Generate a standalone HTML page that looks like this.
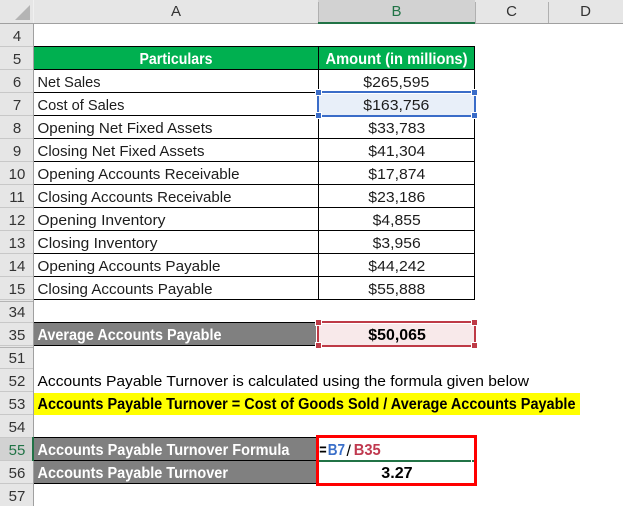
<!DOCTYPE html>
<html>
<head>
<meta charset="utf-8">
<style>
html,body{margin:0;padding:0;background:#fff;width:623px;height:506px;overflow:hidden}
svg{display:block}
text{font-family:"Liberation Sans",sans-serif;font-size:14.6px;fill:#1c1c1c}
.b{font-weight:700;font-size:15.4px}
.w{fill:#fff;font-weight:700;font-size:15.4px}
.k{fill:#000}
.h{fill:#333;font-size:15px;text-anchor:middle}
.n{fill:#333;font-size:15px;text-anchor:middle}
</style>
</head>
<body>
<svg width="623" height="506" viewBox="0 0 623 506" xmlns="http://www.w3.org/2000/svg">
<rect width="623" height="506" fill="#fff"/>
<g shape-rendering="crispEdges">
<!-- headers -->
<rect x="0" y="0" width="623" height="23" fill="#e6e6e6"/>
<rect x="0" y="23" width="33" height="483" fill="#e6e6e6"/>
<rect x="318" y="0" width="157" height="22" fill="#d2d2d2"/>
<rect x="0" y="23" width="623" height="1" fill="#a0a0a0"/>
<rect x="318" y="22" width="157" height="2" fill="#217346"/>
<rect x="33" y="0" width="1" height="23" fill="#f0f0f0"/>
<rect x="33" y="23" width="1" height="483" fill="#a0a0a0"/>
<rect x="475" y="2" width="1" height="21" fill="#b0b0b0"/>
<rect x="548" y="2" width="1" height="21" fill="#b0b0b0"/>
<rect x="318" y="2" width="1" height="20" fill="#b0b0b0"/>
<!-- row header lines -->
<rect x="0" y="46" width="33" height="1" fill="#c8c8c8"/>
<rect x="0" y="69" width="33" height="1" fill="#c8c8c8"/>
<rect x="0" y="92" width="33" height="1" fill="#c8c8c8"/>
<rect x="0" y="115" width="33" height="1" fill="#c8c8c8"/>
<rect x="0" y="138" width="33" height="1" fill="#c8c8c8"/>
<rect x="0" y="161" width="33" height="1" fill="#c8c8c8"/>
<rect x="0" y="184" width="33" height="1" fill="#c8c8c8"/>
<rect x="0" y="207" width="33" height="1" fill="#c8c8c8"/>
<rect x="0" y="230" width="33" height="1" fill="#c8c8c8"/>
<rect x="0" y="253" width="33" height="1" fill="#c8c8c8"/>
<rect x="0" y="276" width="33" height="1" fill="#c8c8c8"/>
<rect x="0" y="299" width="33" height="1" fill="#c8c8c8"/>
<rect x="0" y="301" width="33" height="1" fill="#b4b4b4"/>
<rect x="0" y="322" width="33" height="1" fill="#c8c8c8"/>
<rect x="0" y="345" width="33" height="1" fill="#c8c8c8"/>
<rect x="0" y="347" width="33" height="1" fill="#b4b4b4"/>
<rect x="0" y="368" width="33" height="1" fill="#c8c8c8"/>
<rect x="0" y="391" width="33" height="1" fill="#c8c8c8"/>
<rect x="0" y="414" width="33" height="1" fill="#c8c8c8"/>
<rect x="0" y="437" width="33" height="1" fill="#c8c8c8"/>
<rect x="0" y="438" width="32" height="22" fill="#d2d2d2"/>
<rect x="32" y="437" width="2" height="24" fill="#217346"/>
<rect x="0" y="460" width="32" height="1" fill="#c8c8c8"/>
<rect x="0" y="483" width="33" height="1" fill="#c8c8c8"/>
<!-- table -->
<rect x="34" y="46" width="441" height="24" fill="#00b050"/>
<rect x="34" y="46" width="441" height="1" fill="#000"/>
<rect x="34" y="69" width="441" height="1" fill="#000"/>
<rect x="34" y="92" width="441" height="1" fill="#000"/>
<rect x="34" y="115" width="441" height="1" fill="#000"/>
<rect x="34" y="138" width="441" height="1" fill="#000"/>
<rect x="34" y="161" width="441" height="1" fill="#000"/>
<rect x="34" y="184" width="441" height="1" fill="#000"/>
<rect x="34" y="207" width="441" height="1" fill="#000"/>
<rect x="34" y="230" width="441" height="1" fill="#000"/>
<rect x="34" y="253" width="441" height="1" fill="#000"/>
<rect x="34" y="276" width="441" height="1" fill="#000"/>
<rect x="34" y="299" width="441" height="1" fill="#000"/>
<rect x="318" y="46" width="1" height="254" fill="#000"/>
<rect x="474" y="46" width="1" height="254" fill="#000"/>
<!-- row 35 -->
<rect x="34" y="322" width="282" height="24" fill="#808080"/>
<rect x="34" y="322" width="282" height="1" fill="#000"/>
<rect x="34" y="345" width="282" height="1" fill="#000"/>
<!-- yellow -->
<rect x="34" y="393" width="546" height="22" fill="#ffff00"/>
<!-- rows 55/56 -->
<rect x="34" y="437" width="282" height="47" fill="#808080"/>
<rect x="34" y="437" width="282" height="1" fill="#000"/>
<rect x="34" y="460" width="282" height="1" fill="#000"/>
<rect x="34" y="483" width="282" height="1" fill="#000"/>
<!-- blue selection -->
<rect x="316" y="91" width="161" height="26" fill="#fff"/>
<rect x="319" y="94" width="155" height="21" fill="#e8eff9"/>
<rect x="317" y="91" width="159" height="2" fill="#3a6cc8"/>
<rect x="317" y="115" width="159" height="2" fill="#3a6cc8"/>
<rect x="317" y="91" width="2" height="26" fill="#3a6cc8"/>
<rect x="474" y="91" width="2" height="26" fill="#3a6cc8"/>
<rect x="315" y="89" width="7" height="7" fill="#fff"/>
<rect x="471" y="89" width="7" height="7" fill="#fff"/>
<rect x="315" y="112" width="7" height="7" fill="#fff"/>
<rect x="471" y="112" width="7" height="7" fill="#fff"/>
<rect x="316" y="90" width="5" height="5" fill="#3a6cc8"/>
<rect x="472" y="90" width="5" height="5" fill="#3a6cc8"/>
<rect x="316" y="113" width="5" height="5" fill="#3a6cc8"/>
<rect x="472" y="113" width="5" height="5" fill="#3a6cc8"/>
<!-- red selection -->
<rect x="319" y="324" width="155" height="21" fill="#f8e9ea"/>
<rect x="317" y="321" width="159" height="2" fill="#be3a46"/>
<rect x="317" y="345" width="159" height="2" fill="#be3a46"/>
<rect x="317" y="321" width="2" height="26" fill="#be3a46"/>
<rect x="474" y="321" width="2" height="26" fill="#be3a46"/>
<rect x="315" y="319" width="7" height="7" fill="#fff"/>
<rect x="471" y="319" width="7" height="7" fill="#fff"/>
<rect x="315" y="342" width="7" height="7" fill="#fff"/>
<rect x="471" y="342" width="7" height="7" fill="#fff"/>
<rect x="316" y="320" width="5" height="5" fill="#be3a46"/>
<rect x="472" y="320" width="5" height="5" fill="#be3a46"/>
<rect x="316" y="343" width="5" height="5" fill="#be3a46"/>
<rect x="472" y="343" width="5" height="5" fill="#be3a46"/>
<!-- green line and red box -->
<rect x="319" y="460" width="152" height="2" fill="#217346"/>
<rect x="472" y="460" width="2" height="2" fill="#217346"/>
<rect x="316" y="435" width="161" height="3" fill="#ff0000"/>
<rect x="316" y="483" width="161" height="3" fill="#ff0000"/>
<rect x="316" y="435" width="3" height="51" fill="#ff0000"/>
<rect x="474" y="435" width="3" height="51" fill="#ff0000"/>
</g>
<polygon points="15,20 30,5 30,20" fill="#b4b4b4"/>
<!-- column letters -->
<text class="h" x="176" y="16">A</text>
<text class="h" x="396.500" y="16" style="fill:#217346">B</text>
<text class="h" x="511.500" y="16">C</text>
<text class="h" x="585.500" y="16">D</text>
<!-- row numbers -->
<text class="n" x="17" y="41">4</text>
<text class="n" x="17" y="64">5</text>
<text class="n" x="17" y="87">6</text>
<text class="n" x="17" y="110">7</text>
<text class="n" x="17" y="133">8</text>
<text class="n" x="17" y="156">9</text>
<text class="n" x="17" y="179">10</text>
<text class="n" x="17" y="202">11</text>
<text class="n" x="17" y="225">12</text>
<text class="n" x="17" y="248">13</text>
<text class="n" x="17" y="271">14</text>
<text class="n" x="17" y="294">15</text>
<text class="n" x="17" y="317">34</text>
<text class="n" x="17" y="340">35</text>
<text class="n" x="17" y="363">51</text>
<text class="n" x="17" y="386">52</text>
<text class="n" x="17" y="409">53</text>
<text class="n" x="17" y="432">54</text>
<text class="n" x="17" y="455" style="fill:#217346">55</text>
<text class="n" x="17" y="478">56</text>
<text class="n" x="17" y="501">57</text>
<!-- table header -->
<text class="w" x="139.500" y="64" textLength="73" lengthAdjust="spacingAndGlyphs">Particulars</text>
<text class="w" x="325.500" y="64" textLength="142" lengthAdjust="spacingAndGlyphs">Amount (in millions)</text>
<!-- labels -->
<text x="37.500" y="87" textLength="63" lengthAdjust="spacingAndGlyphs">Net Sales</text>
<text x="37.500" y="110" textLength="87" lengthAdjust="spacingAndGlyphs">Cost of Sales</text>
<text x="37.500" y="133" textLength="175" lengthAdjust="spacingAndGlyphs">Opening Net Fixed Assets</text>
<text x="37.500" y="156" textLength="167" lengthAdjust="spacingAndGlyphs">Closing Net Fixed Assets</text>
<text x="37.500" y="179" textLength="202" lengthAdjust="spacingAndGlyphs">Opening Accounts Receivable</text>
<text x="37.500" y="202" textLength="194" lengthAdjust="spacingAndGlyphs">Closing Accounts Receivable</text>
<text x="37.500" y="225" textLength="128" lengthAdjust="spacingAndGlyphs">Opening Inventory</text>
<text x="37.500" y="248" textLength="120" lengthAdjust="spacingAndGlyphs">Closing Inventory</text>
<text x="37.500" y="271" textLength="183" lengthAdjust="spacingAndGlyphs">Opening Accounts Payable</text>
<text x="37.500" y="294" textLength="175" lengthAdjust="spacingAndGlyphs">Closing Accounts Payable</text>
<!-- values -->
<text x="363.300" y="87" textLength="66" lengthAdjust="spacingAndGlyphs">$265,595</text>
<text x="363.300" y="110" textLength="66" lengthAdjust="spacingAndGlyphs">$163,756</text>
<text x="368.300" y="133" textLength="57" lengthAdjust="spacingAndGlyphs">$33,783</text>
<text x="368.300" y="156" textLength="57" lengthAdjust="spacingAndGlyphs">$41,304</text>
<text x="368.300" y="179" textLength="57" lengthAdjust="spacingAndGlyphs">$17,874</text>
<text x="368.300" y="202" textLength="57" lengthAdjust="spacingAndGlyphs">$23,186</text>
<text x="372.700" y="225" textLength="48" lengthAdjust="spacingAndGlyphs">$4,855</text>
<text x="372.700" y="248" textLength="48" lengthAdjust="spacingAndGlyphs">$3,956</text>
<text x="368.300" y="271" textLength="57" lengthAdjust="spacingAndGlyphs">$44,242</text>
<text x="368.300" y="294" textLength="57" lengthAdjust="spacingAndGlyphs">$55,888</text>
<!-- row 35 -->
<text class="w" x="37.500" y="340" textLength="184" lengthAdjust="spacingAndGlyphs">Average Accounts Payable</text>
<text class="b k" x="368.300" y="340" textLength="57.500" lengthAdjust="spacingAndGlyphs">$50,065</text>
<!-- notes -->
<text class="k" x="37.500" y="386" textLength="491.500" lengthAdjust="spacingAndGlyphs">Accounts Payable Turnover is calculated using the formula given below</text>
<text class="b k" x="37.500" y="409" textLength="538" lengthAdjust="spacingAndGlyphs">Accounts Payable Turnover = Cost of Goods Sold / Average Accounts Payable</text>
<!-- rows 55/56 -->
<text class="w" x="37.500" y="455" textLength="252" lengthAdjust="spacingAndGlyphs">Accounts Payable Turnover Formula</text>
<text class="w" x="37.500" y="478" textLength="190.500" lengthAdjust="spacingAndGlyphs">Accounts Payable Turnover</text>
<text class="b k" x="319.300" y="455" textLength="7.400" lengthAdjust="spacingAndGlyphs">=</text>
<text class="b" x="327.700" y="455" textLength="17.300" lengthAdjust="spacingAndGlyphs" style="fill:#3a6fc9">B7</text>
<text class="k" x="346.500" y="456" style="font-size:16px">/</text>
<text class="b" x="353.700" y="455" textLength="27" lengthAdjust="spacingAndGlyphs" style="fill:#c0394f">B35</text>
<text class="b k" x="381.300" y="478" textLength="31.300" lengthAdjust="spacingAndGlyphs">3.27</text>
</svg>
</body>
</html>
